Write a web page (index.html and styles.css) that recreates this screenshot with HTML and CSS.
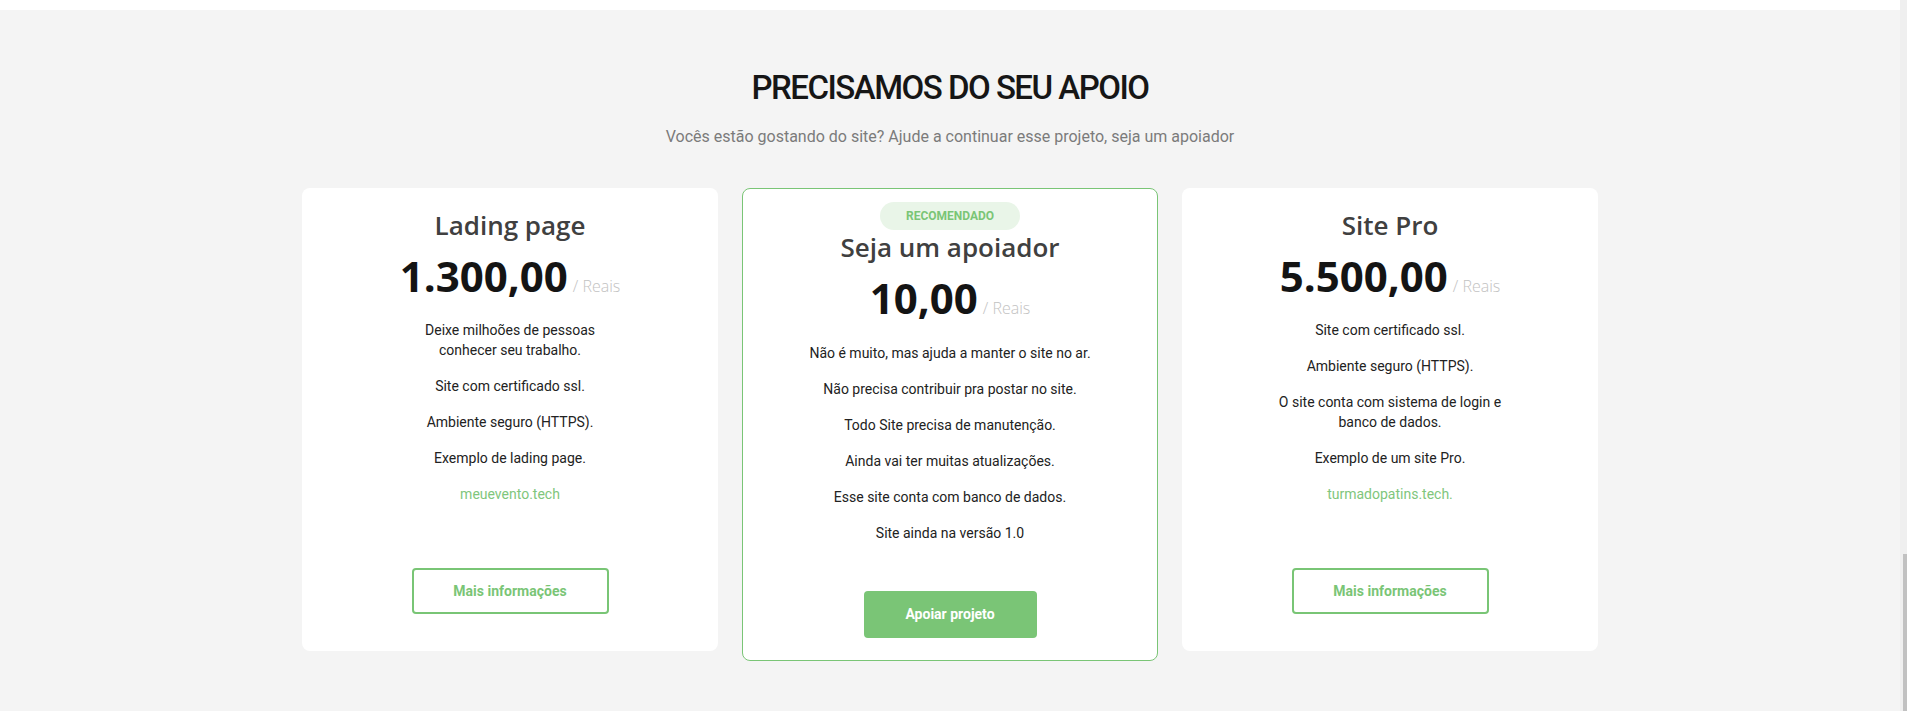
FILE: index.html
```html
<!DOCTYPE html>
<html lang="pt-BR">
<head>
<meta charset="utf-8">
<title>Precisamos do seu apoio</title>
<link rel="stylesheet" href="styles.css">
</head>
<body>
<div class="page">
  <div class="viewport">
    <div class="topbar"></div>
    <section class="support">
      <h2 class="support-title">PRECISAMOS DO SEU APOIO</h2>
      <p class="support-sub">Vocês estão gostando do site? Ajude a continuar esse projeto, seja um apoiador</p>
      <div class="plans">
        <article class="plan">
          <h3 class="plan-name">Lading page</h3>
          <div class="plan-price"><span class="amount">1.300,00</span><span class="unit">/ Reais</span></div>
          <ul class="features features--narrow">
            <li>Deixe milhoões de pessoas conhecer seu trabalho.</li>
            <li>Site com certificado ssl.</li>
            <li>Ambiente seguro (HTTPS).</li>
            <li>Exemplo de lading page.</li>
            <li><a class="feature-link" href="#">meuevento.tech</a></li>
          </ul>
          <a class="btn btn--outline" href="#">Mais informações</a>
        </article>
        <article class="plan plan--featured">
          <span class="badge">RECOMENDADO</span>
          <h3 class="plan-name">Seja um apoiador</h3>
          <div class="plan-price"><span class="amount">10,00</span><span class="unit">/ Reais</span></div>
          <ul class="features">
            <li>Não é muito, mas ajuda a manter o site no ar.</li>
            <li>Não precisa contribuir pra postar no site.</li>
            <li>Todo Site precisa de manutenção.</li>
            <li>Ainda vai ter muitas atualizações.</li>
            <li>Esse site conta com banco de dados.</li>
            <li>Site ainda na versão 1.0</li>
          </ul>
          <a class="btn btn--solid" href="#">Apoiar projeto</a>
        </article>
        <article class="plan">
          <h3 class="plan-name">Site Pro</h3>
          <div class="plan-price"><span class="amount">5.500,00</span><span class="unit">/ Reais</span></div>
          <ul class="features features--narrow">
            <li>Site com certificado ssl.</li>
            <li>Ambiente seguro (HTTPS).</li>
            <li>O site conta com sistema de login e banco de dados.</li>
            <li>Exemplo de um site Pro.</li>
            <li><a class="feature-link" href="#">turmadopatins.tech.</a></li>
          </ul>
          <a class="btn btn--outline" href="#">Mais informações</a>
        </article>
      </div>
    </section>
  </div>
  <div class="scrollbar"><div class="scrollbar-thumb"></div></div>
</div>
</body>
</html>
```
FILE: styles.css
```css
* { box-sizing: border-box; }

html, body {
  margin: 0;
  height: 711px;
  overflow: hidden;
}

body {
  font-family: Roboto, "Liberation Sans", sans-serif;
  background: #f4f4f4;
}

.page {
  display: flex;
  height: 711px;
}

.viewport {
  flex: 1;
  background: #f4f4f4;
  display: flex;
  flex-direction: column;
}

.topbar {
  height: 10px;
  background: #ffffff;
  flex-shrink: 0;
}

.scrollbar {
  width: 7px;
  background: #efefef;
  display: flex;
  flex-direction: column;
  justify-content: flex-end;
  align-items: flex-end;
}

.scrollbar-thumb {
  width: 4px;
  height: 157px;
  background: #c1c1c1;
}

.support {
  padding-top: 57px;
  display: flex;
  flex-direction: column;
  align-items: center;
}

.support-title {
  margin: 0;
  font-family: Roboto, sans-serif;
  font-weight: 500;
  font-size: 33px;
  letter-spacing: -1.5px;
  line-height: 42px;
  color: #161616;
}

.support-sub {
  margin: 17px 0 0;
  font-family: Roboto, sans-serif;
  font-size: 16px;
  line-height: 22px;
  color: #7b7b7b;
}

.plans {
  margin-top: 40px;
  display: flex;
  justify-content: center;
  align-items: flex-start;
  gap: 24px;
}

.plan {
  width: 416px;
  background: #ffffff;
  border-radius: 8px;
  padding: 22px 0 37px;
  display: flex;
  flex-direction: column;
  align-items: center;
  text-align: center;
}

.plan--featured {
  border: 1px solid #7ac576;
  padding: 13px 0 22px;
}

.badge {
  display: inline-block;
  height: 28px;
  line-height: 28px;
  padding: 0 26px;
  border-radius: 14px;
  background: #e9f5e8;
  color: #7ac576;
  font-family: Roboto, sans-serif;
  font-weight: 700;
  font-size: 12px;
}

.plan--featured .plan-name {
  margin-top: 2px;
}

.plan-name {
  margin: 0;
  font-family: "Open Sans", sans-serif;
  font-weight: 600;
  font-size: 26px;
  line-height: 1.2;
  color: #404040;
}

.plan-price {
  margin-top: 10px;
  display: flex;
  align-items: baseline;
  justify-content: center;
  gap: 5px;
}

.amount {
  font-family: "Open Sans", sans-serif;
  font-weight: 700;
  font-size: 42px;
  line-height: 50px;
  color: #141414;
}

.unit {
  font-family: "Open Sans", sans-serif;
  font-weight: 300;
  font-size: 16px;
  color: #c2c2c2;
}

.features {
  list-style: none;
  margin: 20px 0 0;
  padding: 0;
}

.features--narrow {
  max-width: 226px;
  margin-top: 19px;
}

.features li {
  font-family: Roboto, sans-serif;
  font-size: 14px;
  line-height: 20px;
  color: #222222;
  margin-bottom: 16px;
}

.features li:last-child {
  margin-bottom: 0;
}

.feature-link {
  color: #80c67c;
  text-decoration: none;
}

.btn {
  display: inline-block;
  font-family: Roboto, sans-serif;
  font-weight: 700;
  font-size: 14px;
  line-height: 20px;
  text-decoration: none;
  border-radius: 4px;
}

.btn--outline {
  margin-top: 64px;
  width: 197px;
  padding: 11px 0;
  border: 2px solid #79c575;
  color: #7ac576;
}

.btn--solid {
  margin-top: 48px;
  width: 173px;
  padding: 13px 0 14px;
  background: #7ac576;
  color: #ffffff;
}
```
